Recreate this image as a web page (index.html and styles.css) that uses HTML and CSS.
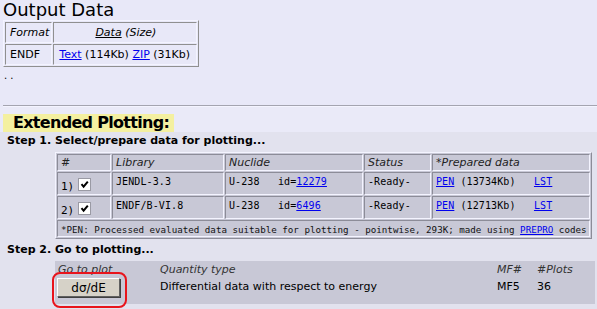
FILE: index.html
```html
<!DOCTYPE html>
<html>
<head>
<meta charset="utf-8">
<link rel="stylesheet" href="styles.css">
</head>
<body>
<div class="top">
  <h1 class="title">Output Data</h1>
  <table class="out">
    <tr><th class="c-fmt">Format</th><th class="c-data"><u>Data</u> (Size)</th></tr>
    <tr><td class="c-fmt">ENDF</td><td class="c-data2"><a href="#">Text</a> (114Kb) <a href="#">ZIP</a> (31Kb)</td></tr>
  </table>
  <div class="dots">. .</div>
  <hr class="rule">
</div>
<div class="ext">
  <div class="ext-head"><span class="ext-title">Extended Plotting:</span></div>
  <div class="steps">
    <div class="step">Step 1. Select/prepare data for plotting...</div>
    <table class="sel">
      <tr class="hdr">
        <th class="c1">#</th><th class="c2">Library</th><th class="c3">Nuclide</th><th class="c4">Status</th><th class="c5">*Prepared data</th>
      </tr>
      <tr class="row">
        <td class="num"><span class="n">1)</span><span class="cb"><svg viewBox="0 0 11 11" width="11" height="11"><path d="M2.5 5.2 L4.6 7.6 L8.8 2.6" fill="none" stroke="#000" stroke-width="2"/></svg></span></td>
        <td class="mono">JENDL-3.3</td>
        <td class="mono">U-238&nbsp;&nbsp;&nbsp;id=<a href="#">12279</a></td>
        <td class="mono">-Ready-</td>
        <td class="mono"><a href="#">PEN</a> (13734Kb)&nbsp;&nbsp;&nbsp;<a href="#">LST</a></td>
      </tr>
      <tr class="row">
        <td class="num"><span class="n">2)</span><span class="cb"><svg viewBox="0 0 11 11" width="11" height="11"><path d="M2.5 5.2 L4.6 7.6 L8.8 2.6" fill="none" stroke="#000" stroke-width="2"/></svg></span></td>
        <td class="mono">ENDF/B-VI.8</td>
        <td class="mono">U-238&nbsp;&nbsp;&nbsp;id=<a href="#">6496</a></td>
        <td class="mono">-Ready-</td>
        <td class="mono"><a href="#">PEN</a> (12713Kb)&nbsp;&nbsp;&nbsp;<a href="#">LST</a></td>
      </tr>
      <tr class="foot">
        <td colspan="5">*PEN: Processed evaluated data suitable for plotting - pointwise, 293K; made using <a href="#">PREPRO</a> codes</td>
      </tr>
    </table>
    <div class="step step2">Step 2. Go to plotting...</div>
    <div class="plot">
      <div class="plot-grid">
        <span class="ph">Go to plot</span>
        <span class="ph">Quantity type</span>
        <span class="ph">MF#</span>
        <span class="ph">#Plots</span>
        <span class="btn-cell"><button class="btn">d&sigma;/dE</button><span class="mark"></span></span>
        <span class="pv">Differential data with respect to energy</span>
        <span class="pv">MF5</span>
        <span class="pv">36</span>
      </div>
    </div>
  </div>
</div>
</body>
</html>
```

FILE: styles.css
```css
html, body {
  margin: 0;
  padding: 0;
}
body {
  background: #e8e8f8;
  font-family: "DejaVu Sans", Verdana, sans-serif;
  font-size: 11px;
  color: #000;
  width: 597px;
  height: 309px;
  overflow: hidden;
}
a { color: #0000ee; }
.top {
  padding: 0 0 0 3px;
}
.title {
  margin: 0;
  font-size: 18px;
  font-weight: normal;
  line-height: 20px;
  height: 20px;
}
.out {
  border-collapse: separate;
  border-spacing: 1px;
  border: 1px solid;
  border-color: #f4f4ff #909090 #909090 #f4f4ff;
}
.out th, .out td {
  border: 1px solid;
  border-color: #909090 #f4f4ff #f4f4ff #909090;
  height: 21px;
  padding: 0 4px 0 5px;
  font-weight: normal;
  text-align: left;
  white-space: nowrap;
  box-sizing: border-box;
}
.out th { font-style: italic; }
.out .c-fmt { width: 46px; padding: 0 2px 0 4px; }
.out .c-data { text-align: center; width: 144px; }
.dots {
  height: 12px;
  line-height: 12px;
  margin-top: 3px;
  padding-left: 1px;
  font-size: 10px;
}
.rule {
  margin: 23px 0 0 0;
  border: 0;
  height: 2px;
  border-top: 1px solid #a4a4b0;
  border-bottom: 1px solid #f4f4ff;
  box-sizing: border-box;
}
.ext-head {
  display: flex;
  padding: 7px 0 0 3px;
  background: #eaeaf8;
}
.ext-title {
  display: block;
  background: #f4f0a0;
  font-weight: bold;
  font-size: 16px;
  letter-spacing: -0.7px;
  line-height: 18px;
  height: 18px;
  padding: 0 5px 0 10px;
}
.steps {
  background: #e2e2ee;
  padding: 0 0 0 7px;
  height: 178px;
  overflow: hidden;
}
.step {
  font-weight: bold;
  font-size: 11px;
  line-height: 14px;
  padding-top: 2px;
  box-sizing: border-box;
  height: 18px;
}
.sel {
  margin: 2px 0 0 48px;
  width: 537px;
  table-layout: fixed;
  border-collapse: separate;
  border-spacing: 1px;
  background: #c8c8d6;
  border: 1px solid;
  border-color: #f4f4ff #8c8c98 #8c8c98 #f4f4ff;
}
.sel th, .sel td {
  box-sizing: border-box;
  border: 1px solid;
  border-color: #8c8c98 #f4f4ff #f4f4ff #8c8c98;
  background: #c8c8d6;
  padding: 1px 3px 0 3px;
  text-align: left;
  vertical-align: top;
  white-space: nowrap;
  overflow: hidden;
}
.sel th {
  font-weight: normal;
  font-style: italic;
  height: 17px;
  line-height: 14px;
  color: #222;
}
.sel .c1 { width: 54px; }
.sel .c2 { width: 112px; }
.sel .c3 { width: 138px; }
.sel .c4 { width: 67px; }
.mono {
  font-family: "DejaVu Sans Mono", "Liberation Mono", monospace;
  font-size: 10px;
  letter-spacing: 0.1px;
  line-height: 12px;
  padding-top: 3px !important;
}
.row td { height: 23px; }
.num {
  font-family: "DejaVu Sans Mono", monospace;
  font-size: 11px;
  line-height: 13px;
}
.num .n {
  display: inline-block;
  margin-top: 6px;
  width: 17px;
  vertical-align: top;
}
.cb {
  display: inline-block;
  width: 11px;
  height: 11px;
  background: #fff;
  border: 1px solid #9a9aa4;
  margin-top: 4px;
  vertical-align: top;
}
.cb svg { display: block; }
.foot td {
  font-family: "DejaVu Sans Mono", monospace;
  font-size: 9.2px;
  height: 17px;
  line-height: 13px;
  padding-top: 2px;
  color: #111;
}
.step2 {
  margin-top: 2px;
  height: 16px;
}
.plot {
  margin: 4px 0 0 48px;
  background: #c8c8d6;
  width: 540px;
  height: 43px;
}
.plot-grid {
  display: grid;
  grid-template-columns: 102px 337px 40px 1fr;
  padding: 1px 0 0 3px;
}
.ph {
  font-style: italic;
  color: #333;
  line-height: 15px;
}
.pv {
  line-height: 18px;
  padding-top: 1px;
}
.btn-cell {
  position: relative;
  padding-top: 1px;
}
.btn {
  display: block;
  font-family: "DejaVu Sans", sans-serif;
  font-size: 12px;
  width: 63px;
  height: 19px;
  background: #d6d2c8;
  border: 1px solid;
  border-color: #ffffff #606060 #606060 #ffffff;
  box-shadow: 1px 1px 0 #404040;
  padding: 0;
  margin-left: -1px;
  color: #000;
}
.mark {
  position: absolute;
  left: -6px;
  top: -5px;
  width: 71px;
  height: 32px;
  border: 2px solid #e8141c;
  border-radius: 8px;
}
```
